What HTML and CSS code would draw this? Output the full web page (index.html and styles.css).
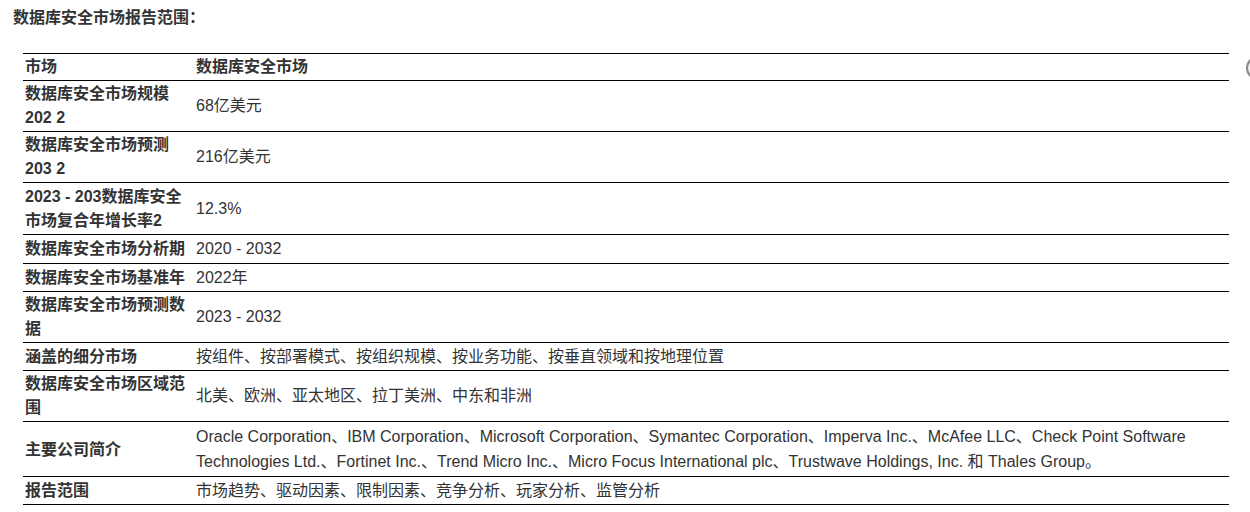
FILE: index.html
```html
<!DOCTYPE html>
<html lang="zh-CN">
<head>
<meta charset="utf-8">
<title>数据库安全市场报告范围</title>
<link rel="stylesheet" href="styles.css">
</head>
<body>
<div class="page">
  <h2 class="title">数据库安全市场报告范围：</h2>
  <table class="scope">
    <colgroup><col class="c1"><col class="c2"></colgroup>
    <tbody>
      <tr><td class="k">市场</td><td class="k">数据库安全市场</td></tr>
      <tr><td class="k">数据库安全市场规模 202 2</td><td>68亿美元</td></tr>
      <tr><td class="k">数据库安全市场预测 203 2</td><td>216亿美元</td></tr>
      <tr class="pad-top"><td class="k">2023 - 203数据库安全市场复合年增长率2</td><td>12.3%</td></tr>
      <tr class="pad-both"><td class="k">数据库安全市场分析期</td><td>2020 - 2032</td></tr>
      <tr class="pad-top"><td class="k">数据库安全市场基准年</td><td>2022年</td></tr>
      <tr><td class="k">数据库安全市场预测数据</td><td>2023 - 2032</td></tr>
      <tr class="pad-top"><td class="k">涵盖的细分市场</td><td>按组件、按部署模式、按组织规模、按业务功能、按垂直领域和按地理位置</td></tr>
      <tr><td class="k">数据库安全市场区域范围</td><td>北美、欧洲、亚太地区、拉丁美洲、中东和非洲</td></tr>
      <tr class="companies"><td class="k">主要公司简介</td><td>Oracle Corporation、IBM Corporation、Microsoft Corporation、Symantec Corporation、Imperva Inc.、McAfee LLC、Check Point Software Technologies Ltd.、Fortinet Inc.、Trend Micro Inc.、Micro Focus International plc、Trustwave Holdings, Inc. 和 Thales Group。</td></tr>
      <tr class="pad-top"><td class="k">报告范围</td><td>市场趋势、驱动因素、限制因素、竞争分析、玩家分析、监管分析</td></tr>
    </tbody>
  </table>
</div>
<div class="side-btn"></div>
</body>
</html>
```

FILE: styles.css
```css
html, body {
  margin: 0;
  padding: 0;
  background: #fff;
}

body {
  font-family: "Liberation Sans", Arial, "Noto Sans CJK SC", sans-serif;
  font-size: 16px;
  color: #333;
}

.page {
  padding: 6px 0 0 13px;
}

.title {
  margin: 0;
  font-size: 16px;
  line-height: 24px;
  font-weight: bold;
  color: #333;
}

.scope {
  margin: 23px 0 0 10px;
  width: 1206px;
  border-collapse: collapse;
  table-layout: fixed;
}

.scope .c1 { width: 171px; }

.scope td {
  border-top: 1px solid #000;
  padding: 1px 3px 1px 2px;
  line-height: 24px;
  vertical-align: middle;
  text-align: left;
}

.scope tr:last-child td {
  border-bottom: 1px solid #000;
}

.scope td.k {
  font-weight: bold;
}

.scope .pad-top td {
  padding-top: 2px;
}

.scope .pad-both td {
  padding-top: 2px;
  padding-bottom: 2px;
}

.scope .companies td {
  padding-top: 2px;
  padding-bottom: 2px;
  line-height: 25px;
}

.side-btn {
  position: fixed;
  left: 1246px;
  top: 56px;
  width: 20px;
  height: 20px;
  border-radius: 50%;
  border: 2px solid #8a8a8a;
  background: #f2f2f2;
}
```
